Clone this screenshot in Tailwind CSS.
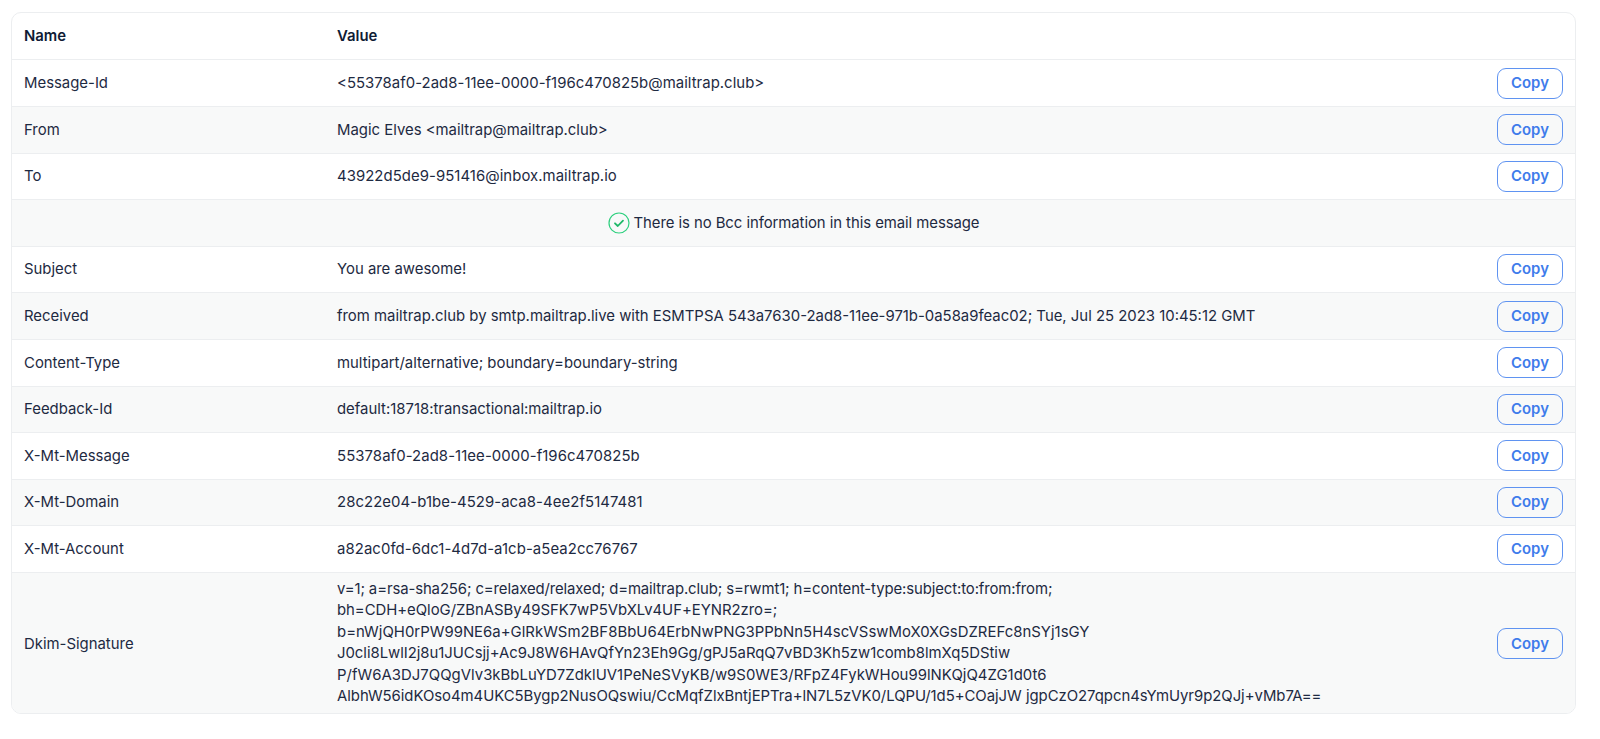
<!DOCTYPE html>
<html lang="en">
<head>
    <meta charset="UTF-8">
    <title>Email headers</title>
    <script src="https://cdn.jsdelivr.net/npm/@tailwindcss/browser@4"></script>
</head>
<body class="h-screen overflow-hidden bg-white font-['Inter',sans-serif] text-[14.9px] text-[#1e2a42]">
    <div class="pt-[12px] pl-[11px] pr-[24px]">
        <div class="border border-[#eceef0] rounded-[10px] overflow-hidden">
            <!-- Header -->
            <div class="flex items-center h-[46.4px] pl-[12px] font-semibold text-[#0f1b35]">
                <div class="w-[313px]">Name</div>
                <div>Value</div>
            </div>

            <div class="flex items-center h-[46.6px] pl-[12px] pr-[12px] border-t border-[#eceef0]">
                <div class="w-[313px]">Message-Id</div>
                <div class="flex-1 tracking-[0.04px]">&lt;55378af0-2ad8-11ee-0000-f196c470825b@mailtrap.club&gt;</div>
                <button class="w-[66px] h-[31px] border-[1.5px] border-[#5f93f1] rounded-[9px] text-[#3f7ceb] font-semibold">Copy</button>
            </div>
            <div class="flex items-center h-[46.6px] pl-[12px] pr-[12px] border-t border-[#eceef0] bg-[#f8f9f9]">
                <div class="w-[313px]">From</div>
                <div class="flex-1">Magic Elves &lt;mailtrap@mailtrap.club&gt;</div>
                <button class="w-[66px] h-[31px] border-[1.5px] border-[#5f93f1] rounded-[9px] text-[#3f7ceb] font-semibold">Copy</button>
            </div>
            <div class="flex items-center h-[46.6px] pl-[12px] pr-[12px] border-t border-[#eceef0]">
                <div class="w-[313px]">To</div>
                <div class="flex-1 tracking-[0.06px]">43922d5de9-951416@inbox.mailtrap.io</div>
                <button class="w-[66px] h-[31px] border-[1.5px] border-[#5f93f1] rounded-[9px] text-[#3f7ceb] font-semibold">Copy</button>
            </div>

            <!-- Bcc notice -->
            <div class="flex items-center justify-center gap-[4px] h-[46.6px] border-t border-[#eceef0] bg-[#f8f9f9]">
                <svg class="w-[22px] h-[22px]" viewBox="0 0 22 22" fill="none">
                    <circle cx="11" cy="11" r="10" stroke="#2fd07f" stroke-width="1.2"/>
                    <path d="M7 11.3l2.8 2.7 5.2-5.4" stroke="#1fb868" stroke-width="1.8" stroke-linecap="round" stroke-linejoin="round"/>
                </svg>
                <span class="tracking-[-0.06px]">There is no Bcc information in this email message</span>
            </div>

            <div class="flex items-center h-[46.6px] pl-[12px] pr-[12px] border-t border-[#eceef0]">
                <div class="w-[313px]">Subject</div>
                <div class="flex-1">You are awesome!</div>
                <button class="w-[66px] h-[31px] border-[1.5px] border-[#5f93f1] rounded-[9px] text-[#3f7ceb] font-semibold">Copy</button>
            </div>
            <div class="flex items-center h-[46.6px] pl-[12px] pr-[12px] border-t border-[#eceef0] bg-[#f8f9f9]">
                <div class="w-[313px]">Received</div>
                <div class="flex-1">from mailtrap.club by smtp.mailtrap.live with ESMTPSA 543a7630-2ad8-11ee-971b-0a58a9feac02; Tue, Jul 25 2023 10:45:12 GMT</div>
                <button class="w-[66px] h-[31px] border-[1.5px] border-[#5f93f1] rounded-[9px] text-[#3f7ceb] font-semibold">Copy</button>
            </div>
            <div class="flex items-center h-[46.6px] pl-[12px] pr-[12px] border-t border-[#eceef0]">
                <div class="w-[313px]">Content-Type</div>
                <div class="flex-1">multipart/alternative; boundary=boundary-string</div>
                <button class="w-[66px] h-[31px] border-[1.5px] border-[#5f93f1] rounded-[9px] text-[#3f7ceb] font-semibold">Copy</button>
            </div>
            <div class="flex items-center h-[46.6px] pl-[12px] pr-[12px] border-t border-[#eceef0] bg-[#f8f9f9]">
                <div class="w-[313px]">Feedback-Id</div>
                <div class="flex-1">default:18718:transactional:mailtrap.io</div>
                <button class="w-[66px] h-[31px] border-[1.5px] border-[#5f93f1] rounded-[9px] text-[#3f7ceb] font-semibold">Copy</button>
            </div>
            <div class="flex items-center h-[46.6px] pl-[12px] pr-[12px] border-t border-[#eceef0]">
                <div class="w-[313px]">X-Mt-Message</div>
                <div class="flex-1 tracking-[0.08px]">55378af0-2ad8-11ee-0000-f196c470825b</div>
                <button class="w-[66px] h-[31px] border-[1.5px] border-[#5f93f1] rounded-[9px] text-[#3f7ceb] font-semibold">Copy</button>
            </div>
            <div class="flex items-center h-[46.6px] pl-[12px] pr-[12px] border-t border-[#eceef0] bg-[#f8f9f9]">
                <div class="w-[313px]">X-Mt-Domain</div>
                <div class="flex-1 tracking-[0.08px]">28c22e04-b1be-4529-aca8-4ee2f5147481</div>
                <button class="w-[66px] h-[31px] border-[1.5px] border-[#5f93f1] rounded-[9px] text-[#3f7ceb] font-semibold">Copy</button>
            </div>
            <div class="flex items-center h-[46.6px] pl-[12px] pr-[12px] border-t border-[#eceef0]">
                <div class="w-[313px]">X-Mt-Account</div>
                <div class="flex-1 tracking-[0.08px]">a82ac0fd-6dc1-4d7d-a1cb-a5ea2cc76767</div>
                <button class="w-[66px] h-[31px] border-[1.5px] border-[#5f93f1] rounded-[9px] text-[#3f7ceb] font-semibold">Copy</button>
            </div>

            <!-- Dkim -->
            <div class="flex items-center h-[140.6px] pl-[12px] pr-[12px] border-t border-[#eceef0] bg-[#f8f9f9]">
                <div class="w-[313px] pt-[2px]">Dkim-Signature</div>
                <div class="flex-1 pt-[1px] leading-[21.4px] tracking-[-0.03px]">
                    <div class="tracking-[-0.1px]">v=1; a=rsa-sha256; c=relaxed/relaxed; d=mailtrap.club; s=rwmt1; h=content-type:subject:to:from:from;</div>
                    <div>bh=CDH+eQloG/ZBnASBy49SFK7wP5VbXLv4UF+EYNR2zro=;</div>
                    <div class="tracking-[0.02px]">b=nWjQH0rPW99NE6a+GlRkWSm2BF8BbU64ErbNwPNG3PPbNn5H4scVSswMoX0XGsDZREFc8nSYj1sGY</div>
                    <div>J0cli8LwlI2j8u1JUCsjj+Ac9J8W6HAvQfYn23Eh9Gg/gPJ5aRqQ7vBD3Kh5zw1comb8lmXq5DStiw</div>
                    <div class="tracking-[0.03px]">P/fW6A3DJ7QQgVlv3kBbLuYD7ZdklUV1PeNeSVyKB/w9S0WE3/RFpZ4FykWHou99lNKQjQ4ZG1d0t6</div>
                    <div>AlbhW56idKOso4m4UKC5Bygp2NusOQswiu/CcMqfZlxBntjEPTra+lN7L5zVK0/LQPU/1d5+COajJW jgpCzO27qpcn4sYmUyr9p2QJj+vMb7A==</div>
                </div>
                <button class="w-[66px] h-[31px] mt-[2px] border-[1.5px] border-[#5f93f1] rounded-[9px] text-[#3f7ceb] font-semibold">Copy</button>
            </div>
        </div>
    </div>
</body>
</html>
